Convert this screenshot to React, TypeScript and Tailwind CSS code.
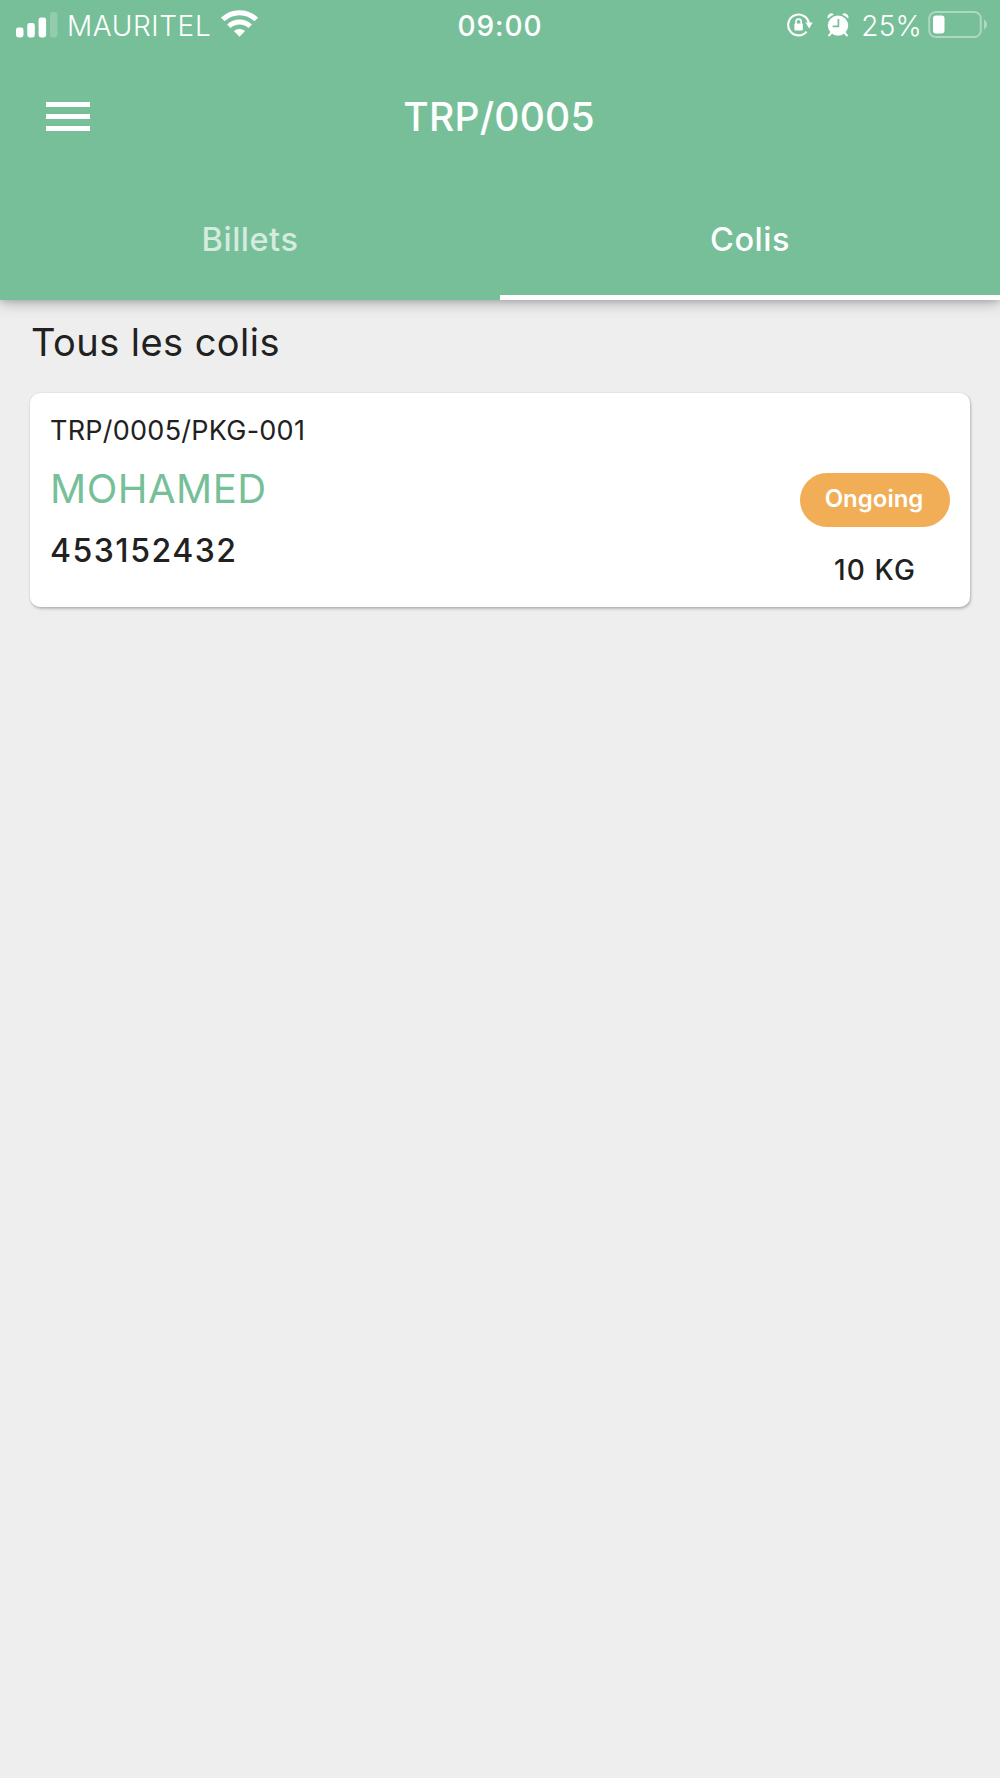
import clsx from "clsx"

type Parcel = {
  reference: string
  customer: string
  phone: string
  status: string
  weight: string
}

const tabs = [
  { id: "tickets", label: "Billets" },
  { id: "parcels", label: "Colis" },
]

const parcels: Parcel[] = [
  {
    reference: "TRP/0005/PKG-001",
    customer: "MOHAMED",
    phone: "453152432",
    status: "Ongoing",
    weight: "10 KG",
  },
]

function SignalIcon() {
  return (
    <svg className="h-[27px] w-[42px]" viewBox="0 0 42 27" fill="currentColor">
      <rect x="0" y="15.5" width="7.5" height="10" rx="2.4" />
      <rect x="11.3" y="11" width="7.5" height="14.5" rx="2.4" />
      <rect x="22.6" y="5.5" width="7.5" height="20" rx="2.4" />
      <rect x="34" y="0" width="7.5" height="25.5" rx="2.4" opacity="0.2" />
    </svg>
  )
}

function WifiIcon() {
  return (
    <svg className="mb-[3px] h-[27px] w-[37px]" viewBox="0 0 37 27" fill="none" stroke="currentColor">
      <path d="M1.8 9.5a24 24 0 0 1 33.4 0" strokeWidth="5.2" />
      <path d="M7.8 16.3a15.4 15.4 0 0 1 21.4 0" strokeWidth="4.8" />
      <path d="M18.5 26.8l-5.6-5.7a8.2 8.2 0 0 1 11.2 0z" fill="currentColor" stroke="none" />
    </svg>
  )
}

function RotationLockIcon() {
  return (
    <svg className="h-6 w-[26px]" viewBox="0 0 26 24" fill="none" stroke="currentColor">
      <path d="M19.6 18.6A10.4 10.4 0 1 1 21.9 10.6" strokeWidth="2.1" />
      <path d="M18.4 9.4h7.2l-3.4 6z" fill="currentColor" stroke="none" />
      <rect x="7.4" y="10.6" width="8.4" height="7" rx="1" fill="currentColor" stroke="none" />
      <path d="M9 11V8.7a2.6 2.6 0 0 1 5.2 0V11" strokeWidth="1.6" />
    </svg>
  )
}

function AlarmIcon() {
  return (
    <svg className="h-6 w-[22px]" viewBox="0 0 22 24" fill="currentColor">
      <circle cx="11" cy="12.6" r="10.2" />
      <path d="M.8 5.6C-.4 3.4 1.8.6 3.6.4c1.4-.3 2.6.4 3.1 1.3C4.5 2.5 2.3 4 .8 5.6z" />
      <path d="M21.2 5.6c1.2-2.2-1-5-2.8-5.2-1.4-.3-2.6.4-3.1 1.3 2.2.8 4.4 2.3 5.9 3.9z" />
      <path d="M4.2 19.8l-2 2.6M17.8 19.8l2 2.6" stroke="currentColor" strokeWidth="2.2" strokeLinecap="round" />
      <path d="M11.4 6v7.4H5.6" fill="none" stroke="#77bf99" strokeWidth="1.7" />
    </svg>
  )
}

function BatteryIcon() {
  return (
    <svg className="h-[28px] w-[59px]" viewBox="0 0 59 28">
      <rect x="1.2" y="1" width="51.6" height="25" rx="6.5" fill="none" stroke="white" strokeWidth="2" opacity="0.4" />
      <rect x="5" y="4.4" width="11.5" height="18.2" rx="3" fill="white" />
      <path d="M56 8.5c1.8 1 3 2.8 3 5s-1.2 4-3 5z" fill="white" opacity="0.4" />
    </svg>
  )
}

function StatusBar() {
  return (
    <div className="grid h-[50px] grid-cols-3 items-center px-[13px] text-[28px] leading-none">
      <div className="flex items-center pl-[3px]">
        <SignalIcon />
        <span className="ml-[9px] w-[154px] pt-px font-[350] tracking-[0.6px]">MAURITEL</span>
        <WifiIcon />
      </div>
      <span className="pt-px text-center font-[550] tracking-[0.9px]">09:00</span>
      <div className="flex items-center justify-end">
        <RotationLockIcon />
        <span className="mr-3 ml-[14px]">
          <AlarmIcon />
        </span>
        <span className="mr-[6px] pt-px font-[350] tracking-[0.2px]">25%</span>
        <BatteryIcon />
      </div>
    </div>
  )
}

function Header({ activeTab }: { activeTab: string }) {
  return (
    <header className="relative h-[300px] bg-[#77bf99] text-white shadow-[0_3px_14px_rgba(0,0,0,0.26),0_2px_5px_rgba(0,0,0,0.1)]">
      <StatusBar />
      <div className="grid h-[132px] grid-cols-[1fr_auto_1fr] items-center pr-12 pl-[46px]">
        <button type="button" aria-label="Menu" className="flex w-11 flex-col gap-[7px]">
          <span className="h-[5px] bg-white" />
          <span className="h-[5px] bg-white" />
          <span className="h-[5px] bg-white" />
        </button>
        <h1 className="text-[39px] leading-none font-[550] tracking-[0.2px]">TRP/0005</h1>
      </div>
      <nav className="grid h-[118px] grid-cols-2">
        {tabs.map((tab) => (
          <button
            key={tab.id}
            type="button"
            className={clsx(
              "border-b-[5px] pt-1 text-[32.5px] font-[550] tracking-[0.5px]",
              tab.id === activeTab ? "border-white text-white" : "border-transparent text-white/70"
            )}
          >
            {tab.label}
          </button>
        ))}
      </nav>
    </header>
  )
}

function ParcelCard({ parcel }: { parcel: Parcel }) {
  return (
    <article className="flex h-[214px] justify-between rounded-[10px] bg-white px-5 shadow-[1px_2px_3px_rgba(0,0,0,0.22),0_0_2px_rgba(0,0,0,0.12)]">
      <div className="flex flex-col pt-[18px]">
        <span className="text-[27px] leading-10 tracking-[0.25px]">{parcel.reference}</span>
        <span className="mt-[13px] text-[40px] leading-[50px] tracking-[0.5px] text-[#77bf99]">{parcel.customer}</span>
        <span className="mt-[17px] text-[32px] leading-10 font-[550] tracking-[1.5px]">{parcel.phone}</span>
      </div>
      <div className="flex flex-col items-center pt-20">
        <span className="flex h-[54px] w-[150px] items-center justify-center rounded-full bg-[#f1ae57] pb-[3px] text-2xl leading-none font-semibold">
          <span className="mr-0.5 text-white">{parcel.status}</span>
        </span>
        <span className="mt-[23px] text-[28px] leading-10 font-[550] tracking-[1.1px]">{parcel.weight}</span>
      </div>
    </article>
  )
}

export default function App() {
  return (
    <div className="h-[1778px] w-[1000px] overflow-hidden bg-[#eeeeee] font-['Inter',sans-serif] text-[#212121]">
      <Header activeTab="parcels" />
      <main className="px-[30px] pt-[17px]">
        <h2 className="mb-[26px] pl-[1px] text-[38px] leading-[50px] tracking-[0.45px]">Tous les colis</h2>
        {parcels.map((parcel) => (
          <ParcelCard key={parcel.reference} parcel={parcel} />
        ))}
      </main>
    </div>
  )
}
